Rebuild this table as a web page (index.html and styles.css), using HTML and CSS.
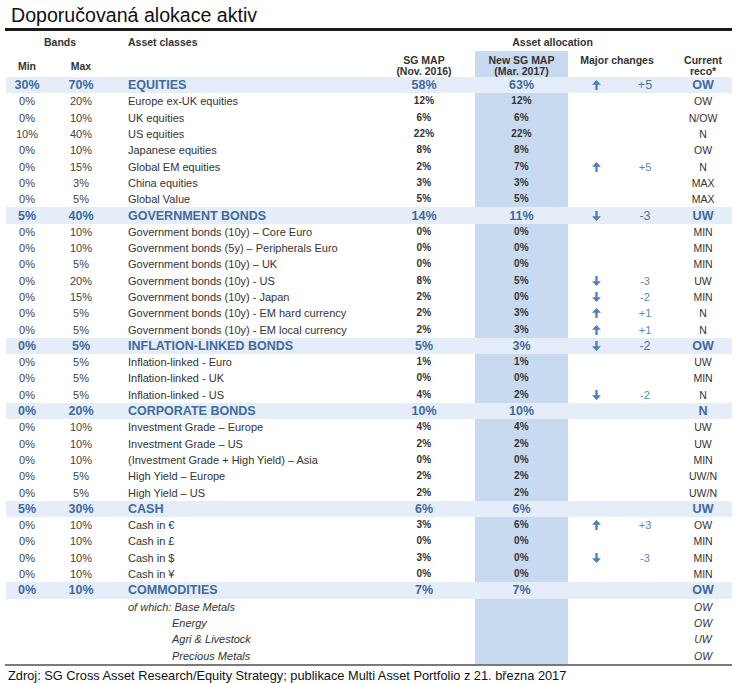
FILE: index.html
```html
<!DOCTYPE html>
<html lang="cs">
<head>
<meta charset="utf-8">
<title>Doporučovaná alokace aktiv</title>
<link rel="stylesheet" href="styles.css">
</head>
<body>
<div class="page">
  <h1 class="title">Doporučovaná alokace aktiv</h1>
  <table class="alloc">
    <colgroup>
      <col class="c-min"><col class="c-max"><col class="c-asset"><col class="c-sg"><col class="c-new"><col class="c-arrow"><col class="c-chg"><col class="c-reco">
    </colgroup>
    <thead>
      <tr class="hr1">
        <th colspan="2">Bands</th>
        <th class="ac">Asset classes</th>
        <th colspan="5">Asset allocation</th>
      </tr>
      <tr class="hr2">
        <th class="mm">Min</th>
        <th class="mm">Max</th>
        <th></th>
        <th>SG MAP<br>(Nov. 2016)</th>
        <th class="new">New SG MAP<br>(Mar. 2017)</th>
        <th colspan="2">Major changes</th>
        <th class="reco">Current<br>reco*</th>
      </tr>
    </thead>
    <tbody>
      <tr class="cat"><td>30%</td><td>70%</td><td class="asset">EQUITIES</td><td>58%</td><td class="new">63%</td><td><svg class="arr" viewBox="0 0 10 11"><path d="M5 0L10 5.2H6.3V11H3.7V5.2H0Z"/></svg></td><td class="chg">+5</td><td class="reco">OW</td></tr>
      <tr><td>0%</td><td>20%</td><td class="asset">Europe ex-UK equities</td><td class="num">12%</td><td class="new num">12%</td><td></td><td></td><td class="reco">OW</td></tr>
      <tr><td>0%</td><td>10%</td><td class="asset">UK equities</td><td class="num">6%</td><td class="new num">6%</td><td></td><td></td><td class="reco">N/OW</td></tr>
      <tr><td>10%</td><td>40%</td><td class="asset">US equities</td><td class="num">22%</td><td class="new num">22%</td><td></td><td></td><td class="reco">N</td></tr>
      <tr><td>0%</td><td>10%</td><td class="asset">Japanese equities</td><td class="num">8%</td><td class="new num">8%</td><td></td><td></td><td class="reco">OW</td></tr>
      <tr><td>0%</td><td>15%</td><td class="asset">Global EM equities</td><td class="num">2%</td><td class="new num">7%</td><td><svg class="arr" viewBox="0 0 10 11"><path d="M5 0L10 5.2H6.3V11H3.7V5.2H0Z"/></svg></td><td class="chg">+5</td><td class="reco">N</td></tr>
      <tr><td>0%</td><td>3%</td><td class="asset">China equities</td><td class="num">3%</td><td class="new num">3%</td><td></td><td></td><td class="reco">MAX</td></tr>
      <tr><td>0%</td><td>5%</td><td class="asset">Global Value</td><td class="num">5%</td><td class="new num">5%</td><td></td><td></td><td class="reco">MAX</td></tr>

      <tr class="cat"><td>5%</td><td>40%</td><td class="asset">GOVERNMENT BONDS</td><td>14%</td><td class="new">11%</td><td><svg class="arr" viewBox="0 0 10 11"><path d="M5 11L10 5.8H6.3V0H3.7V5.8H0Z"/></svg></td><td class="chg">-3</td><td class="reco">UW</td></tr>
      <tr><td>0%</td><td>10%</td><td class="asset">Government bonds (10y) – Core Euro</td><td class="num">0%</td><td class="new num">0%</td><td></td><td></td><td class="reco">MIN</td></tr>
      <tr><td>0%</td><td>10%</td><td class="asset">Government bonds (5y) – Peripherals Euro</td><td class="num">0%</td><td class="new num">0%</td><td></td><td></td><td class="reco">MIN</td></tr>
      <tr><td>0%</td><td>5%</td><td class="asset">Government bonds (10y) – UK</td><td class="num">0%</td><td class="new num">0%</td><td></td><td></td><td class="reco">MIN</td></tr>
      <tr><td>0%</td><td>20%</td><td class="asset">Government bonds (10y) - US</td><td class="num">8%</td><td class="new num">5%</td><td><svg class="arr" viewBox="0 0 10 11"><path d="M5 11L10 5.8H6.3V0H3.7V5.8H0Z"/></svg></td><td class="chg">-3</td><td class="reco">UW</td></tr>
      <tr><td>0%</td><td>15%</td><td class="asset">Government bonds (10y) - Japan</td><td class="num">2%</td><td class="new num">0%</td><td><svg class="arr" viewBox="0 0 10 11"><path d="M5 11L10 5.8H6.3V0H3.7V5.8H0Z"/></svg></td><td class="chg">-2</td><td class="reco">MIN</td></tr>
      <tr><td>0%</td><td>5%</td><td class="asset">Government bonds (10y) - EM hard currency</td><td class="num">2%</td><td class="new num">3%</td><td><svg class="arr" viewBox="0 0 10 11"><path d="M5 0L10 5.2H6.3V11H3.7V5.2H0Z"/></svg></td><td class="chg">+1</td><td class="reco">N</td></tr>
      <tr><td>0%</td><td>5%</td><td class="asset">Government bonds (10y) - EM local currency</td><td class="num">2%</td><td class="new num">3%</td><td><svg class="arr" viewBox="0 0 10 11"><path d="M5 0L10 5.2H6.3V11H3.7V5.2H0Z"/></svg></td><td class="chg">+1</td><td class="reco">N</td></tr>

      <tr class="cat"><td>0%</td><td>5%</td><td class="asset">INFLATION-LINKED BONDS</td><td>5%</td><td class="new">3%</td><td><svg class="arr" viewBox="0 0 10 11"><path d="M5 11L10 5.8H6.3V0H3.7V5.8H0Z"/></svg></td><td class="chg">-2</td><td class="reco">OW</td></tr>
      <tr><td>0%</td><td>5%</td><td class="asset">Inflation-linked - Euro</td><td class="num">1%</td><td class="new num">1%</td><td></td><td></td><td class="reco">UW</td></tr>
      <tr><td>0%</td><td>5%</td><td class="asset">Inflation-linked - UK</td><td class="num">0%</td><td class="new num">0%</td><td></td><td></td><td class="reco">MIN</td></tr>
      <tr><td>0%</td><td>5%</td><td class="asset">Inflation-linked - US</td><td class="num">4%</td><td class="new num">2%</td><td><svg class="arr" viewBox="0 0 10 11"><path d="M5 11L10 5.8H6.3V0H3.7V5.8H0Z"/></svg></td><td class="chg">-2</td><td class="reco">N</td></tr>

      <tr class="cat"><td>0%</td><td>20%</td><td class="asset">CORPORATE BONDS</td><td>10%</td><td class="new">10%</td><td></td><td></td><td class="reco">N</td></tr>
      <tr><td>0%</td><td>10%</td><td class="asset">Investment Grade – Europe</td><td class="num">4%</td><td class="new num">4%</td><td></td><td></td><td class="reco">UW</td></tr>
      <tr><td>0%</td><td>10%</td><td class="asset">Investment Grade – US</td><td class="num">2%</td><td class="new num">2%</td><td></td><td></td><td class="reco">UW</td></tr>
      <tr><td>0%</td><td>10%</td><td class="asset">(Investment Grade + High Yield) – Asia</td><td class="num">0%</td><td class="new num">0%</td><td></td><td></td><td class="reco">MIN</td></tr>
      <tr><td>0%</td><td>5%</td><td class="asset">High Yield – Europe</td><td class="num">2%</td><td class="new num">2%</td><td></td><td></td><td class="reco">UW/N</td></tr>
      <tr><td>0%</td><td>5%</td><td class="asset">High Yield – US</td><td class="num">2%</td><td class="new num">2%</td><td></td><td></td><td class="reco">UW/N</td></tr>

      <tr class="cat"><td>5%</td><td>30%</td><td class="asset">CASH</td><td>6%</td><td class="new">6%</td><td></td><td></td><td class="reco">UW</td></tr>
      <tr><td>0%</td><td>10%</td><td class="asset">Cash in €</td><td class="num">3%</td><td class="new num">6%</td><td><svg class="arr" viewBox="0 0 10 11"><path d="M5 0L10 5.2H6.3V11H3.7V5.2H0Z"/></svg></td><td class="chg">+3</td><td class="reco">OW</td></tr>
      <tr><td>0%</td><td>10%</td><td class="asset">Cash in £</td><td class="num">0%</td><td class="new num">0%</td><td></td><td></td><td class="reco">MIN</td></tr>
      <tr><td>0%</td><td>10%</td><td class="asset">Cash in $</td><td class="num">3%</td><td class="new num">0%</td><td><svg class="arr" viewBox="0 0 10 11"><path d="M5 11L10 5.8H6.3V0H3.7V5.8H0Z"/></svg></td><td class="chg">-3</td><td class="reco">MIN</td></tr>
      <tr><td>0%</td><td>10%</td><td class="asset">Cash in ¥</td><td class="num">0%</td><td class="new num">0%</td><td></td><td></td><td class="reco">MIN</td></tr>

      <tr class="cat"><td>0%</td><td>10%</td><td class="asset">COMMODITIES</td><td>7%</td><td class="new">7%</td><td></td><td></td><td class="reco">OW</td></tr>
      <tr class="it"><td></td><td></td><td class="asset">of which: Base Metals</td><td></td><td class="new"></td><td></td><td></td><td class="reco">OW</td></tr>
      <tr class="it"><td></td><td></td><td class="asset sub">Energy</td><td></td><td class="new"></td><td></td><td></td><td class="reco">OW</td></tr>
      <tr class="it"><td></td><td></td><td class="asset sub">Agri &amp; Livestock</td><td></td><td class="new"></td><td></td><td></td><td class="reco">UW</td></tr>
      <tr class="it"><td></td><td></td><td class="asset sub">Precious Metals</td><td></td><td class="new"></td><td></td><td></td><td class="reco">OW</td></tr>
    </tbody>
  </table>
  <p class="source">Zdroj: SG Cross Asset Research/Equity Strategy; publikace Multi Asset Portfolio z 21. března 2017</p>
</div>
</body>
</html>
```

FILE: styles.css
```css
html, body {
  margin: 0;
  padding: 0;
  background: #ffffff;
}

body {
  font-family: "Liberation Sans", Arial, Helvetica, sans-serif;
  color: #333333;
}

.page {
  width: 727px;
  padding-left: 5px;
}

.title {
  margin: 0;
  height: 25px;
  padding: 3px 0 0 6px;
  font-size: 19.6px;
  line-height: 24px;
  font-weight: normal;
  color: #111111;
  border-bottom: 3px solid #1a1a1a;
}

.alloc {
  margin-left: 1px;
  width: 726px;
  table-layout: fixed;
  border-collapse: collapse;
  border-spacing: 0;
}

.c-min { width: 42px; }
.c-max { width: 66px; }
.c-asset { width: 259px; }
.c-sg { width: 102px; }
.c-new { width: 93px; }
.c-arrow { width: 56px; }
.c-chg { width: 42px; }
.c-reco { width: 66px; }

.alloc th {
  padding: 0;
  font-size: 10.5px;
  font-weight: bold;
  color: #333333;
  text-align: center;
  vertical-align: top;
  line-height: 10.5px;
}

.hr1 th {
  height: 20px;
  padding-top: 6px;
  box-sizing: border-box;
}

.hr1 th.ac {
  text-align: left;
  padding-left: 14px;
}

.hr2 th {
  height: 26px;
  padding-top: 4px;
  box-sizing: border-box;
}

.hr2 th.mm {
  padding-top: 10px;
}

.hr2 th.reco {
  padding-left: 8px;
}

.alloc td {
  height: 16.3px;
  padding: 0;
  font-size: 11px;
  line-height: 12px;
  text-align: center;
  vertical-align: middle;
  color: #444444;
  white-space: nowrap;
}

.alloc td.asset {
  text-align: left;
  padding-left: 14px;
  color: #333333;
}

.alloc td.num {
  font-weight: bold;
  font-size: 10px;
  letter-spacing: 0.2px;
  color: #333333;
}

.alloc td.reco {
  padding-left: 8px;
  font-size: 10.5px;
  color: #333333;
}

.alloc td.chg {
  color: #5b86bd;
}

.alloc .new {
  background: #c8daf0;
}

.arr {
  width: 9px;
  height: 10px;
  display: block;
  margin: 0 auto;
  fill: #4f7fbc;
}

/* category rows */
.alloc tr.cat td {
  background: #e5eef8;
  color: #3e6aa2;
  font-size: 12.5px;
  font-weight: bold;
}

.alloc tr.cat td.chg {
  font-weight: normal;
  color: #4a76ae;
}

.alloc tr.cat td.reco {
  font-size: 12.5px;
  color: #3e6aa2;
}

/* italic commodity breakdown */
.alloc tr.it td {
  font-style: italic;
}

.alloc td.sub {
  padding-left: 58px;
}

.source {
  margin: 0;
  border-top: 2px solid #7a7a7a;
  padding: 2px 0 0 3px;
  font-size: 12.8px;
  line-height: 16px;
  color: #111111;
}
```
